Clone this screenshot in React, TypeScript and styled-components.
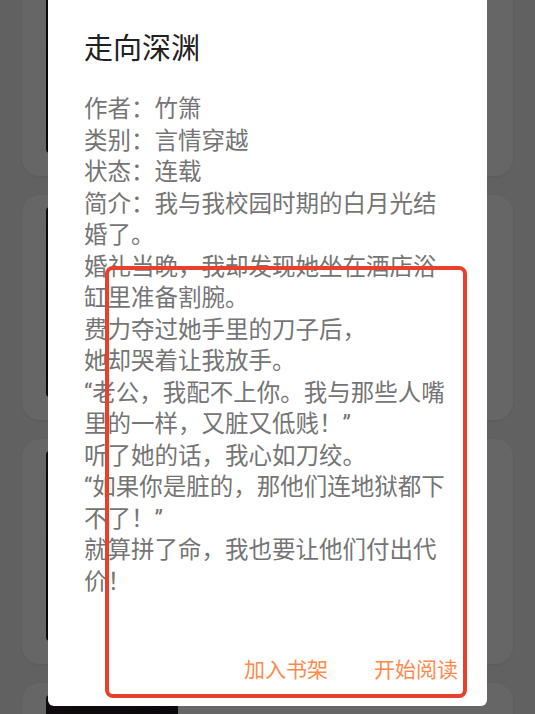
import styled, { createGlobalStyle } from 'styled-components';

const books = [
  { id: 1, title: '都市至尊医仙', author: '云中客' },
  { id: 2, title: '重生之商业帝国', author: '南山' },
  { id: 3, title: '我的绝色老婆', author: '青木' },
  { id: 4, title: '龙王殿', author: '北辰' },
];

const introLines = [
  '作者：竹箫',
  '类别：言情穿越',
  '状态：连载',
  '简介：我与我校园时期的白月光结',
  '婚了。',
  '婚礼当晚，我却发现她坐在酒店浴',
  '缸里准备割腕。',
  '费力夺过她手里的刀子后，',
  '她却哭着让我放手。',
  '“老公，我配不上你。我与那些人嘴',
  '里的一样，又脏又低贱！”',
  '听了她的话，我心如刀绞。',
  '“如果你是脏的，那他们连地狱都下',
  '不了！”',
  '就算拼了命，我也要让他们付出代',
  '价！',
];

const App = (): JSX.Element => {
  return (
    <>
      <GlobalStyle />
      <Page>
        <BookList>
          {books.map(book =>
            <BookCard key={book.id}>
              <Cover />
              <BookInfo>
                <BookTitle>{book.title}</BookTitle>
                <BookAuthor>{book.author}</BookAuthor>
              </BookInfo>
            </BookCard>
          )}
        </BookList>
      </Page>
      <Overlay>
        <Dialog>
          <Title>走向深渊</Title>
          <Intro>
            {introLines.map((line, i) =>
              <IntroLine key={i}>{line}</IntroLine>
            )}
          </Intro>
          <Actions>
            <ActionButton>加入书架</ActionButton>
            <ActionButton>开始阅读</ActionButton>
          </Actions>
        </Dialog>
      </Overlay>
      <Highlight />
    </>
  )
}

export default App;


const GlobalStyle = createGlobalStyle`
  html, body {
    margin: 0;
    padding: 0;
    height: 100%;
    overflow: hidden;
  }
  body {
    background: #f2f2f2;
    font-family: Roboto, "Noto Sans CJK SC", sans-serif;
  }
`

const Page = styled.div`
  height: 714px;
  overflow: hidden;
`

const BookList = styled.div`
  display: flex;
  flex-direction: column;
  gap: 19px;
  padding: 0 22px;
  margin-top: -49px;
`

const BookCard = styled.div`
  display: flex;
  gap: 16px;
  height: 225px;
  padding: 12px 24px;
  box-sizing: border-box;
  background: #fff;
  border-radius: 18px;
  box-shadow: 0 1px 3px rgba(0, 0, 0, 0.08);
`

const Cover = styled.div`
  width: 132px;
  height: 190px;
  flex-shrink: 0;
  background: linear-gradient(160deg, #2a1d24, #0d0b10 60%, #3a2430);
  border-radius: 4px;
`

const BookInfo = styled.div`
  display: flex;
  flex-direction: column;
  gap: 8px;
  padding-top: 16px;
  padding-left: 40px;
`

const BookTitle = styled.div`
  font-size: 20px;
  color: #111;
`

const BookAuthor = styled.div`
  font-size: 16px;
  color: #888;
`

const Overlay = styled.div`
  position: fixed;
  inset: 0;
  background: rgba(0, 0, 0, 0.6);
  display: flex;
  justify-content: center;
  align-items: flex-start;
`

const Dialog = styled.div`
  width: 439px;
  height: 706px;
  box-sizing: border-box;
  background: #fff;
  border-radius: 0 0 6px 6px;
  display: flex;
  flex-direction: column;
  padding: 31px 0 12px 36px;
`

const Title = styled.div`
  font-size: 29px;
  line-height: 36px;
  color: #212121;
`

const Intro = styled.div`
  margin-top: 27px;
  font-size: 23.5px;
  line-height: 31.5px;
  color: #757575;
`

const IntroLine = styled.div`
  white-space: nowrap;
`

const Actions = styled.div`
  margin-top: auto;
  display: flex;
  justify-content: flex-end;
  gap: 30px;
  padding-right: 21px;
`

const ActionButton = styled.div`
  font-size: 21px;
  line-height: 24px;
  padding: 12px 8px;
  color: #ff8a4c;
  cursor: pointer;
`

const Highlight = styled.div`
  position: fixed;
  left: 105px;
  top: 266px;
  width: 362px;
  height: 432px;
  box-sizing: border-box;
  border: 4px solid #e8402a;
  border-radius: 8px;
  pointer-events: none;
`
